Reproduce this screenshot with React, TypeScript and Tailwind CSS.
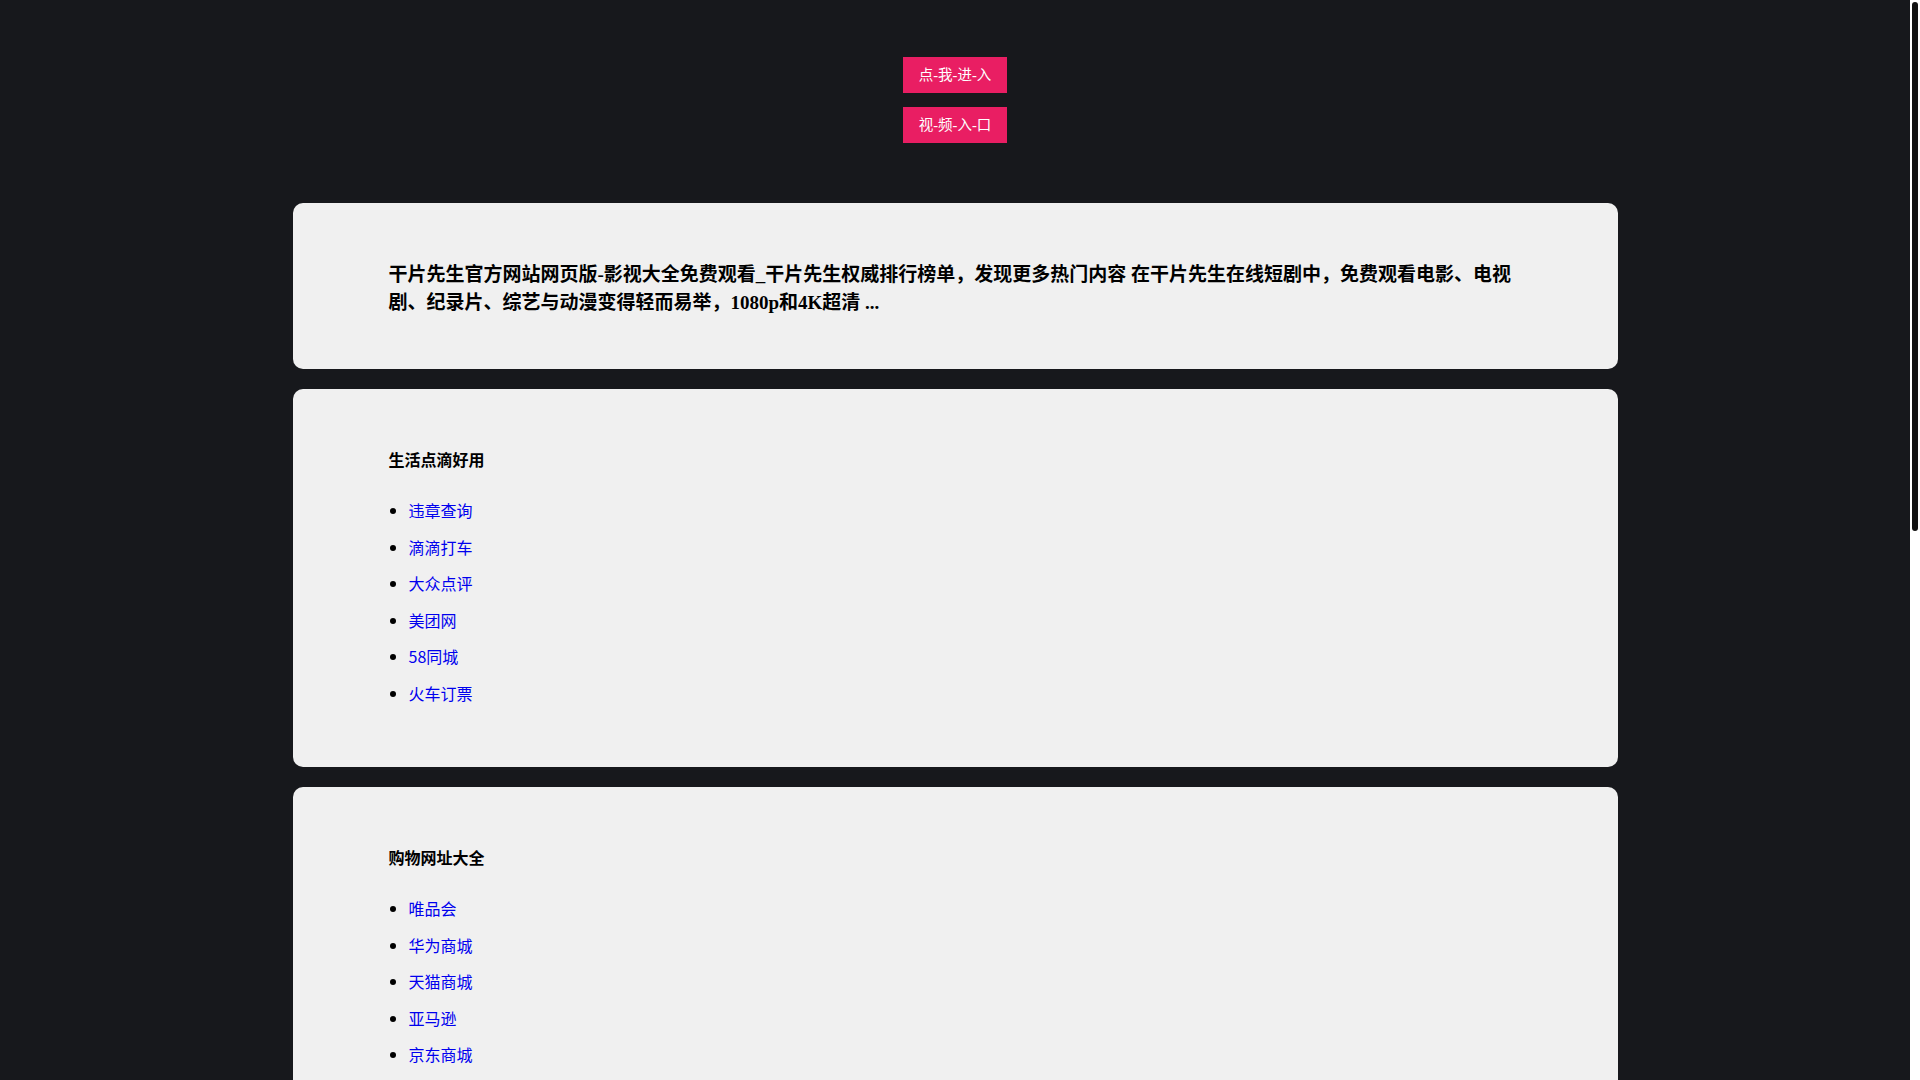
const serif = "font-['Liberation_Serif','Noto_Sans_CJK_SC',serif]";

const sections = [
  {
    title: "生活点滴好用",
    links: ["违章查询", "滴滴打车", "大众点评", "美团网", "58同城", "火车订票"],
  },
  {
    title: "购物网址大全",
    links: ["唯品会", "华为商城", "天猫商城", "亚马逊", "京东商城", "苏宁易购"],
  },
  {
    title: "休闲娱乐推荐",
    links: ["腾讯视频", "爱奇艺", "优酷视频", "芒果TV", "哔哩哔哩", "网易云音乐"],
  },
  {
    title: "实用工具导航",
    links: ["天气预报", "快递查询", "在线翻译", "地图导航", "万年历", "汇率换算"],
  },
];

const LinkCard = ({ title, links }: { title: string; links: string[] }) => (
  <section className="w-[1325px] mx-auto mb-5 rounded-[10px] bg-[#f0f0f0] px-24 pt-[59px] pb-[56px]">
    <h4 className="text-base font-bold leading-[23px] text-black font-['Noto_Sans_CJK_SC',sans-serif]">
      {title}
    </h4>
    <ul className="mt-[21px] list-disc pl-5 text-black font-['Noto_Sans_CJK_SC',sans-serif]">
      {links.map((l) => (
        <li key={l} className="text-base leading-[36.5px]">
          <a href="#" className="text-[#0000ee]">
            {l}
          </a>
        </li>
      ))}
    </ul>
  </section>
);

export default function App() {
  return (
    <div className="flex h-screen bg-[#17181c]">
      <div className="flex-1 overflow-y-auto [scrollbar-width:none]">
        {/* Entry buttons */}
        <div className={`flex flex-col items-center gap-[14px] pt-[57px] ${serif}`}>
          <a href="#" className="flex h-9 w-[104px] items-center justify-center bg-[#e91e63] pt-[2px] text-[14.5px] text-white">
            点-我-进-入
          </a>
          <a href="#" className="flex h-9 w-[104px] items-center justify-center bg-[#e91e63] pt-[2px] text-[14.5px] text-white">
            视-频-入-口
          </a>
        </div>

        <main className="mt-[60px]">
          {/* Intro */}
          <section className="w-[1325px] mx-auto mb-5 rounded-[10px] bg-[#f0f0f0] px-24 pt-[58px] pb-[53px]">
            <p className={`text-[19px] font-bold leading-[27.7px] text-black ${serif}`}>
              干片先生官方网站网页版-影视大全免费观看_干片先生权威排行榜单，发现更多热门内容 在干片先生在线短剧中，免费观看电影、电视剧、纪录片、综艺与动漫变得轻而易举，1080p和4K超清 ...
            </p>
          </section>

          {sections.map((s) => (
            <LinkCard key={s.title} title={s.title} links={s.links} />
          ))}
        </main>

        <footer className="py-[90px] text-center text-sm text-[#888] font-['Noto_Sans_CJK_SC',sans-serif]">
          © 干片先生 版权所有
        </footer>
      </div>

      {/* Scrollbar */}
      <div className="w-[10px] shrink-0 bg-white px-[2px] pt-[2px]">
        <div className="h-[529px] rounded-full bg-[#111]" />
      </div>
    </div>
  );
}
